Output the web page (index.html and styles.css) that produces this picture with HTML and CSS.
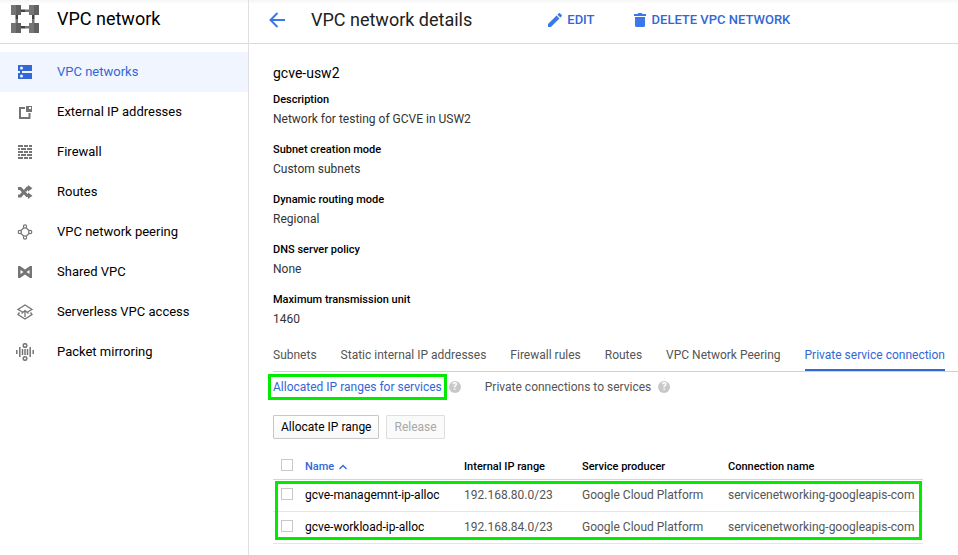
FILE: index.html
```html
<!DOCTYPE html>
<html lang="en">
<head>
<meta charset="utf-8">
<title>VPC network details</title>
<link rel="stylesheet" href="styles.css">
</head>
<body>
<div class="app">
  <aside class="sidebar">
    <header class="bar product">
      <svg class="product-logo" viewBox="0 0 28 28" aria-hidden="true">
        <path fill="#757575" d="M14 4.500h4v2.500h-4zM14 21h4v2.500h-4zM4.500 14H7v4H4.500zM21 14h2.500v4H21z"/>
        <path fill="#424242" d="M10 4.500h4v2.500h-4zM10 21h4v2.500h-4zM4.500 10H7v4H4.500zM21 10h2.500v4H21z"/>
        <path fill="#757575" d="M0 0h10v10H0zM18 0h10v10H18zM0 18h10v10H0zM18 18h10v10H18z"/>
        <path fill="#616161" d="M5 0h5v10H5zM23 0h5v10h-5zM5 18h5v10H5zM23 18h5v10h-5z"/>
      </svg>
      <h2 class="bar-title">VPC network</h2>
    </header>
    <nav class="nav" aria-label="VPC network">
      <a class="nav-item active" href="#" aria-current="page">
        <svg class="nav-icon" viewBox="0 0 18 18" fill="currentColor" aria-hidden="true"><path fill-rule="evenodd" d="M2.500 2h13a.5.5 0 0 1 .5.5v5a.5.5 0 0 1-.5.5H6v2h9.500a.5.5 0 0 1 .5.5v5a.5.5 0 0 1-.5.5h-13a.5.5 0 0 1-.5-.5v-5a.5.5 0 0 1 .5-.5H4V8H2.500a.5.5 0 0 1-.5-.5v-5a.5.5 0 0 1 .5-.5zM5.500 3.500a1.500 1.500 0 1 0 0 3 1.500 1.500 0 0 0 0-3zm0 8a1.500 1.500 0 1 0 0 3 1.500 1.500 0 0 0 0-3z"/></svg>
        VPC networks</a>
      <a class="nav-item" href="#">
        <svg class="nav-icon" viewBox="0 0 18 18" fill="currentColor" aria-hidden="true"><path fill-rule="evenodd" d="M3 4h6v2H5v8h7.500v-4h2v6H3zM10 3h6v6h-6zm3 1v2h2V4z"/></svg>
        External IP addresses</a>
      <a class="nav-item" href="#">
        <svg class="nav-icon" viewBox="0 0 18 18" fill="currentColor" aria-hidden="true"><path d="M2 2h5v2H2zM8 2h4v2H8zM13 2h3v2h-3zM2 5h2v2H2zM5 5h5v2H5zM11 5h5v2h-5zM2 8h5v2H2zM8 8h4v2H8zM13 8h3v2h-3zM2 11h2v2H2zM5 11h5v2H5zM11 11h5v2h-5zM2 14h5v2H2zM8 14h4v2H8zM13 14h3v2h-3z"/></svg>
        Firewall</a>
      <a class="nav-item" href="#">
        <svg class="nav-icon" viewBox="0 0 18 18" aria-hidden="true"><path fill="none" stroke="currentColor" stroke-width="3" d="M2 5.500h2.500l6.500 7H13M2 13h2.500l2.500-3M9 8l2.500-3H13"/><path fill="currentColor" d="M12 2l4.500 3.300L12 8.500zM12 9.500l4.500 3.300L12 16z"/></svg>
        Routes</a>
      <a class="nav-item" href="#">
        <svg class="nav-icon" viewBox="0 0 18 18" fill="none" stroke="currentColor" stroke-width="1.200" aria-hidden="true"><circle cx="9" cy="3.500" r="1.600"/><circle cx="9" cy="14.500" r="1.600"/><circle cx="3.800" cy="9" r="1.600"/><circle cx="14.200" cy="9" r="1.600"/><path d="M5 7.500l2.700-2.500M10.300 5L13 7.500M5 10.500L7.700 13M10.300 13l2.700-2.500"/></svg>
        VPC network peering</a>
      <a class="nav-item" href="#">
        <svg class="nav-icon" viewBox="0 0 18 18" fill="currentColor" aria-hidden="true"><path fill-rule="evenodd" d="M2 3h2l5 3.500L14 3h2v12h-2l-5-3.500L4 15H2zM4.500 7v4L7.500 9zM13.500 7l-3 2 3 2z"/></svg>
        Shared VPC</a>
      <a class="nav-item" href="#">
        <svg class="nav-icon" viewBox="0 0 18 18" fill="none" stroke="currentColor" stroke-width="1.300" aria-hidden="true"><path d="M6.500 9L2 6.500 9 2l7 4.500L11.500 9M3.500 9.500L2 11.500 9 16l7-4.500-1.500-2M9 14V7.500M5.500 10.500L9 7.500l3.500 3"/></svg>
        Serverless VPC access</a>
      <a class="nav-item" href="#">
        <svg class="nav-icon" viewBox="0 0 18 18" fill="none" stroke="currentColor" stroke-width="1.500" aria-hidden="true"><circle cx="9" cy="2.500" r="1.800"/><circle cx="9" cy="15.500" r="1.800"/><path d="M.8 7v4M3.800 4v10M6.500 6v6M9 6v6M11.500 6v6M14.200 4v10M17.200 7v4"/></svg>
        Packet mirroring</a>
    </nav>
  </aside>

  <main class="main">
    <header class="bar page-bar">
      <button class="back" type="button" aria-label="Back">
        <svg class="back-icon" viewBox="0 0 16 16" fill="none" stroke="currentColor" stroke-width="2" aria-hidden="true"><path d="M16 8H1.500M8.500 1l-7 7 7 7"/></svg>
      </button>
      <h1 class="bar-title page-title">VPC network details</h1>
      <div class="actions">
        <button class="action" type="button">
          <svg class="action-icon" viewBox="0 0 14 14" fill="currentColor" aria-hidden="true"><path d="M0 11.100V14h2.900l8.600-8.600-2.900-2.900zM13.700 3.200a.8.8 0 0 0 0-1.100L11.900.3a.8.8 0 0 0-1.100 0L9.400 1.700l2.900 2.900z"/></svg>
          EDIT</button>
        <button class="action" type="button">
          <svg class="action-icon" viewBox="0 0 14 14" fill="currentColor" aria-hidden="true"><path d="M2 4h10v8.500a1.500 1.500 0 0 1-1.500 1.500h-7A1.500 1.500 0 0 1 2 12.500zM1 1h3.500l1-1h3l1 1H13v2H1z"/></svg>
          DELETE VPC NETWORK</button>
      </div>
    </header>

    <section class="details">
      <h2 class="network-name">gcve-usw2</h2>
      <dl class="facts">
        <div class="fact"><dt>Description</dt><dd>Network for testing of GCVE in USW2</dd></div>
        <div class="fact"><dt>Subnet creation mode</dt><dd>Custom subnets</dd></div>
        <div class="fact"><dt>Dynamic routing mode</dt><dd>Regional</dd></div>
        <div class="fact"><dt>DNS server policy</dt><dd>None</dd></div>
        <div class="fact"><dt>Maximum transmission unit</dt><dd>1460</dd></div>
      </dl>

      <nav class="tabs" aria-label="Network sections">
        <a class="tab" href="#">Subnets</a>
        <a class="tab" href="#">Static internal IP addresses</a>
        <a class="tab" href="#">Firewall rules</a>
        <a class="tab" href="#">Routes</a>
        <a class="tab" href="#">VPC Network Peering</a>
        <a class="tab active" href="#" aria-current="true">Private service connection</a>
      </nav>

      <nav class="subtabs" aria-label="Private service connection">
        <span class="subtab-group">
          <a class="subtab active" href="#" aria-current="true">Allocated IP ranges for services</a>
          <button class="help" type="button" aria-label="About allocated ranges">?</button>
        </span>
        <span class="subtab-group">
          <a class="subtab" href="#">Private connections to services</a>
          <button class="help" type="button" aria-label="About private connections">?</button>
        </span>
      </nav>

      <div class="buttons">
        <button class="btn" type="button">Allocate IP range</button>
        <button class="btn" type="button" disabled>Release</button>
      </div>

      <div class="table-wrap">
        <table class="ranges">
          <thead>
            <tr>
              <th class="check" scope="col"><input type="checkbox" aria-label="Select all"></th>
              <th class="name sorted" scope="col" aria-sort="ascending">Name
                <svg class="sort-icon" viewBox="0 0 8 6" fill="none" stroke="currentColor" stroke-width="1.300" aria-hidden="true"><path d="M.5 5L4 1.500 7.500 5"/></svg></th>
              <th class="range" scope="col">Internal IP range</th>
              <th class="producer" scope="col">Service producer</th>
              <th class="connection" scope="col">Connection name</th>
            </tr>
          </thead>
          <tbody>
            <tr>
              <td class="check"><input type="checkbox" aria-label="Select gcve-managemnt-ip-alloc"></td>
              <td class="name">gcve-managemnt-ip-alloc</td>
              <td>192.168.80.0/23</td>
              <td>Google Cloud Platform</td>
              <td>servicenetworking-googleapis-com</td>
            </tr>
            <tr>
              <td class="check"><input type="checkbox" aria-label="Select gcve-workload-ip-alloc"></td>
              <td class="name">gcve-workload-ip-alloc</td>
              <td>192.168.84.0/23</td>
              <td>Google Cloud Platform</td>
              <td>servicenetworking-googleapis-com</td>
            </tr>
          </tbody>
        </table>
        <div class="rows-highlight"></div>
      </div>
    </section>
  </main>
</div>
</body>
</html>
```

FILE: styles.css
```css
* {
  box-sizing: border-box;
}

body {
  margin: 0;
  background: #fff;
  color: #000;
  font: 12px/20px Roboto, "Liberation Sans", sans-serif;
}

h1, h2, dl, dd {
  margin: 0;
}

a {
  color: inherit;
  text-decoration: none;
}

button {
  margin: 0;
  padding: 0;
  border: 0;
  background: none;
  color: inherit;
  font: inherit;
}

svg {
  display: block;
  flex: none;
}

.app {
  display: flex;
  min-height: 100vh;
}

.sidebar {
  flex: none;
  width: 249px;
  border-right: 1px solid #e0e0e0;
}

.main {
  flex: 1;
  min-width: 0;
}

.bar {
  display: flex;
  align-items: center;
  height: 44px;
  padding-bottom: 5px;
  border-bottom: 1px solid #dadada;
  background: linear-gradient(#f5f5f5, #fff 4px);
}

.bar-title {
  font-size: 18px;
  font-weight: 400;
  line-height: 24px;
}

.product {
  gap: 18px;
  padding-left: 11px;
}

.product-logo {
  width: 28px;
  height: 28px;
}

.nav {
  padding-top: 8px;
}

.nav-item {
  display: flex;
  align-items: center;
  gap: 23px;
  height: 40px;
  padding-left: 16px;
  font-size: 13px;
}

.nav-item.active {
  background: #f0f5ff;
  color: #3367d6;
}

.nav-icon {
  width: 18px;
  height: 18px;
  color: #757575;
}

.nav-item.active .nav-icon {
  color: #3367d6;
}

.page-bar {
  padding: 0 0 4px 20px;
}

.back {
  color: #3b78e7;
}

.back-icon {
  width: 16px;
  height: 16px;
}

.page-title {
  margin-left: 26px;
  color: #212121;
}

.actions {
  display: flex;
  gap: 38px;
  margin-left: 76px;
}

.action {
  display: flex;
  align-items: center;
  gap: 5px;
  color: #3367d6;
  font-size: 13px;
  font-weight: 500;
}

.action-icon {
  width: 14px;
  height: 14px;
  color: #3b78e7;
}

.details {
  padding: 19px 0 0 24px;
}

.network-name {
  font-size: 14px;
  font-weight: 400;
}

.facts {
  display: grid;
  gap: 10px;
  margin-top: 6px;
}

.fact dt {
  padding-top: 2px;
  font-size: 11px;
  font-weight: 500;
  line-height: 18px;
}

.fact dd {
  color: #333;
}

.tabs {
  display: flex;
  gap: 24px;
  margin-top: 10px;
  border-bottom: 1px solid #d0d0d0;
  color: #555;
}

.tab {
  padding: 6px 0 4px;
  border-bottom: 2px solid transparent;
  white-space: nowrap;
}

.tab.active {
  border-color: #3367d6;
  color: #3367d6;
}

.subtabs {
  display: flex;
  gap: 24px;
  padding: 5px 0;
  color: #555;
}

.subtab-group {
  display: flex;
  align-items: center;
  gap: 7px;
}

.subtab.active {
  margin: 0 -2px;
  padding: 0 2px;
  color: #3367d6;
  outline: 3px solid #00eb00;
}

.help {
  width: 12px;
  height: 12px;
  border-radius: 50%;
  background: #c8c8c8;
  color: #fff;
  font-size: 10px;
  font-weight: 700;
  line-height: 12px;
  text-align: center;
}

.buttons {
  display: flex;
  gap: 7px;
  margin-top: 13px;
}

.btn {
  height: 24px;
  padding: 0 7px;
  border: 1px solid #c8c8c8;
  border-radius: 1px;
  background: linear-gradient(#fff, #f8f8f8);
}

.btn:disabled {
  border-color: #dedede;
  background: #fafafa;
  color: #a8a8a8;
}

.table-wrap {
  position: relative;
  width: 650px;
  max-width: 100%;
  margin-top: 13px;
}

.ranges {
  width: 100%;
  border-collapse: separate;
  border-spacing: 0;
  table-layout: fixed;
}

.ranges th,
.ranges td {
  height: 32px;
  padding: 0 0 2px;
  border-bottom: 1px solid #e5e5e5;
  color: #555;
  text-align: left;
  white-space: nowrap;
}

.ranges th {
  height: 28px;
  padding: 2px 0 0;
  border-color: #d4d4d4;
  color: #000;
  font-size: 11px;
  font-weight: 500;
}

.ranges .check {
  width: 32px;
  padding: 0 0 2px 8px;
}

.ranges td.check {
  padding-bottom: 4px;
}

.ranges .name {
  width: 159px;
  color: #000;
}

.ranges .range {
  width: 118px;
}

.ranges .producer {
  width: 146px;
}

.ranges .sorted {
  color: #3367d6;
}

.sort-icon {
  display: inline-block;
  width: 8px;
  height: 6px;
  margin-left: 2px;
}

.ranges input {
  display: block;
  width: 12px;
  height: 12px;
  margin: 0;
  border: 1px solid #c8c8c8;
  background: #fff;
  appearance: none;
}

.ranges input:checked {
  background: #3367d6;
}

.rows-highlight {
  position: absolute;
  inset: 29px 1px 4px 2px;
  border: 3px solid #00eb00;
  pointer-events: none;
}
```
